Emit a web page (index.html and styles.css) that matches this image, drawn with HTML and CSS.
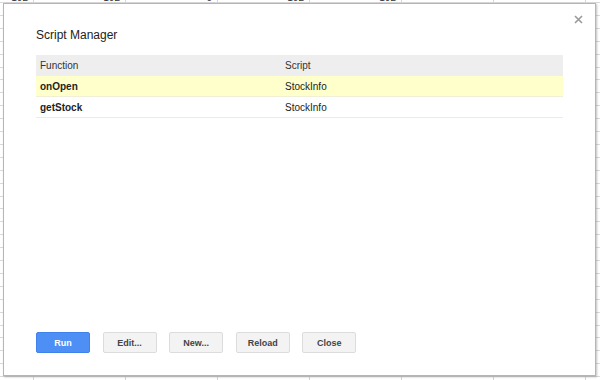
FILE: index.html
```html
<!DOCTYPE html>
<html>
<head>
<meta charset="utf-8">
<link rel="stylesheet" href="styles.css">
</head>
<body>
<div class="sheet">
  <div class="numrow">
    <div class="num c0">102</div>
    <div class="num">102</div>
    <div class="num">0</div>
    <div class="num">102</div>
    <div class="num">102</div>
    <div class="num"></div>
    <div class="num"></div>
  </div>
</div>
<div class="dialog">
  <button class="close" aria-label="Close">
    <svg width="9" height="9" viewBox="0 0 9 9"><path d="M1 1L8 8M8 1L1 8" stroke="#9a9a9a" stroke-width="1.6" fill="none"/></svg>
  </button>
  <div class="title">Script Manager</div>
  <div class="table">
    <div class="row head">
      <div class="cell fn">Function</div>
      <div class="cell">Script</div>
    </div>
    <div class="row sel">
      <div class="cell fn b">onOpen</div>
      <div class="cell">StockInfo</div>
    </div>
    <div class="row">
      <div class="cell fn b">getStock</div>
      <div class="cell">StockInfo</div>
    </div>
  </div>
  <div class="spacer"></div>
  <div class="buttons">
    <button class="btn primary">Run</button>
    <button class="btn">Edit...</button>
    <button class="btn">New...</button>
    <button class="btn">Reload</button>
    <button class="btn">Close</button>
  </div>
</div>
</body>
</html>
```

FILE: styles.css
```css
html, body {
  margin: 0;
  padding: 0;
}
body {
  width: 600px;
  height: 380px;
  overflow: hidden;
  position: relative;
  font-family: "Liberation Sans", Arial, sans-serif;
  background-color: #fff;
  background-image:
    repeating-linear-gradient(to bottom, transparent 0, transparent 2px, #dadada 2px, #dadada 3px, transparent 3px, transparent 12.9px),
    repeating-linear-gradient(to right, transparent 0, transparent 32px, #d6d6d6 32px, #d6d6d6 33px, transparent 33px, transparent 92px);
  background-position: 0 0, 1px 0;
}
.sheet {
  height: 3px;
  overflow: hidden;
}
.numrow {
  display: flex;
  height: 3px;
}
.num {
  width: 92px;
  flex: none;
  height: 3px;
  display: flex;
  align-items: flex-end;
  justify-content: flex-end;
  font-size: 10px;
  line-height: 10px;
  color: #333;
  padding-right: 5px;
  box-sizing: border-box;
  margin-bottom: -2px;
}
.num.c0 {
  width: 33px;
}
.dialog {
  position: absolute;
  left: 3px;
  top: 3px;
  width: 593px;
  height: 373px;
  background: #fff;
  border: 1px solid #b5b5b5;
  box-shadow: 1px 1px 2px rgba(0,0,0,0.25);
  display: flex;
  flex-direction: column;
  padding: 24px 32px 22px 32px;
  box-sizing: border-box;
}
.close {
  position: absolute;
  top: 11px;
  right: 12px;
  width: 9px;
  height: 9px;
  padding: 0;
  border: 0;
  background: none;
  display: flex;
}
.title {
  font-size: 12px;
  line-height: 14px;
  color: #222;
  margin-bottom: 13px;
}
.table {
  display: flex;
  flex-direction: column;
  font-size: 10px;
  color: #222;
}
.row {
  display: flex;
  height: 20px;
  align-items: center;
  border-bottom: 1px solid #ebebeb;
}
.row.head {
  background: #eeeeee;
  border-bottom: 0;
  height: 21px;
  color: #333;
}
.row.sel {
  background: #ffffcc;
  border-bottom-color: #f0f0d8;
}
.cell {
  padding-left: 4px;
  flex: 1;
}
.cell.fn {
  flex: none;
  width: 241px;
}
.b {
  font-weight: bold;
}
.spacer {
  flex: 1;
}
.buttons {
  display: flex;
  gap: 12.6px;
}
.btn {
  width: 54px;
  height: 21px;
  box-sizing: border-box;
  border: 1px solid #dcdcdc;
  border-radius: 2px;
  background: #f3f3f3;
  color: #444;
  font-family: "Liberation Sans", Arial, sans-serif;
  font-size: 9px;
  font-weight: bold;
  padding: 0;
}
.btn.primary {
  background: #4d8ff5;
  border-color: #3f82ec;
  color: #fff;
}
```
